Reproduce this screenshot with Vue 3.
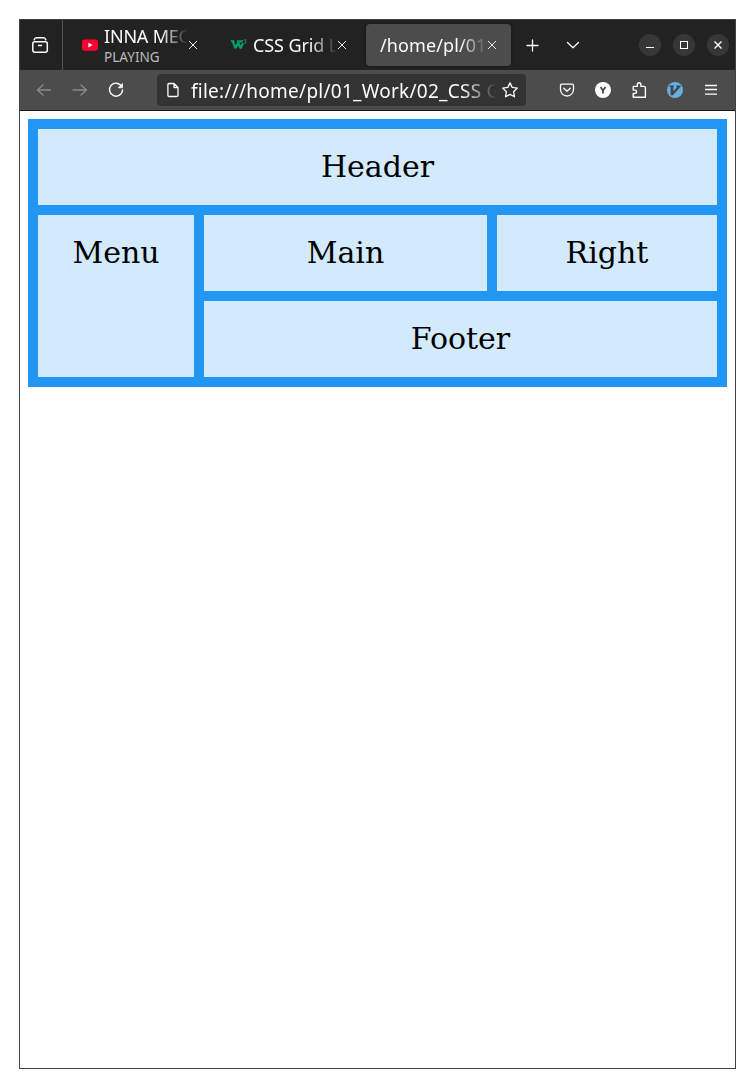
<script setup>
const cells = ['Header', 'Menu', 'Main', 'Right', 'Footer']
</script>

<template>
  <div class="window">
    <div class="tabbar">
      <div class="view">
        <svg width="18" height="18" viewBox="0 0 18 18" fill="none" stroke="#fbfbfe" stroke-width="1.5" stroke-linecap="round" stroke-linejoin="round">
          <rect x="1.8" y="5.8" width="14.5" height="10.4" rx="2" />
          <path d="M3.2 3.8Q3.8 1.8 5.5 1.8H12.5Q14.2 1.8 14.8 3.8M7.5 9.5H10.5" />
        </svg>
      </div>
      <div class="tab first">
        <svg class="fav" width="16" height="16" viewBox="0 0 16 16">
          <rect y="2.4" width="16" height="11.4" rx="2.8" fill="#ff0033" />
          <path d="M6.4 5.8 10.6 8.1 6.4 10.4Z" fill="#fff" />
        </svg>
        <div class="label">
          <div class="title t1">INNA MEC</div>
          <div class="playing">PLAYING</div>
        </div>
        <svg class="x" width="10" height="10" viewBox="0 0 10 10"><path d="M1 1 9 9M9 1 1 9" /></svg>
      </div>
      <div class="tab second">
        <svg class="fav" width="16" height="16" viewBox="0 0 16 16">
          <path d="M1.5 3.6 4.4 11.2 7.3 5.6 9.6 11.2 12 6.2" fill="none" stroke="#04a069" stroke-width="2.3" stroke-linejoin="bevel" />
          <path d="M0 3.2H3.4V5H0ZM6 3.2H12.6L11.2 5.4H6Z" fill="#04a069" />
          <path d="M13.2 2.8H15.1L14.1 4.2Q15.6 4.6 15 5.9 14.3 6.7 13.2 6" fill="none" stroke="#04a069" stroke-width=".9" />
        </svg>
        <div class="title t2">CSS Grid L</div>
        <svg class="x" width="10" height="10" viewBox="0 0 10 10"><path d="M1 1 9 9M9 1 1 9" /></svg>
      </div>
      <div class="tab active">
        <div class="title t3">/home/pl/01</div>
        <svg class="x" width="10" height="10" viewBox="0 0 10 10"><path d="M1 1 9 9M9 1 1 9" /></svg>
      </div>
      <div class="tool plus">
        <svg width="14" height="14" viewBox="0 0 14 14" class="line"><path d="M7.5 2V13M2 7.5H13" /></svg>
      </div>
      <div class="tool chevron">
        <svg width="14" height="14" viewBox="0 0 14 14" class="line"><path d="M1.5 4.5 7 9.8 12.5 4.5" /></svg>
      </div>
      <div class="controls">
        <div class="control"><svg width="22" height="22" viewBox="0 0 22 22"><path d="M7 13.5H15" stroke="#fff" /></svg></div>
        <div class="control"><svg width="22" height="22" viewBox="0 0 22 22"><rect x="7.5" y="7.5" width="7" height="7" fill="none" stroke="#fff" /></svg></div>
        <div class="control"><svg width="22" height="22" viewBox="0 0 22 22"><path d="M7.5 7.5 14.5 14.5M14.5 7.5 7.5 14.5" stroke="#fff" stroke-width="1.4" /></svg></div>
      </div>
    </div>

    <div class="toolbar">
      <div class="btn"><svg width="16" height="16" viewBox="0 0 16 16" class="line dim"><path d="M14.5 8H1.5M7 3 1.5 8 7 13" /></svg></div>
      <div class="btn"><svg width="16" height="16" viewBox="0 0 16 16" class="line dim"><path d="M1 8H14.5M9 3 14.5 8 9 13" /></svg></div>
      <div class="btn"><svg width="16" height="16" viewBox="0 0 16 16" class="line"><path d="M13.7 4.5A6.5 6.5 0 1 0 14.5 8" stroke-width="1.4" /><path d="M14.5 1.8V5.8H10.5Z" fill="#fbfbfe" stroke-width=".7" /></svg></div>
      <div class="url">
        <svg width="16" height="16" viewBox="0 0 16 16" class="line"><path d="M4.2 1.5H9L13 5.5V13.2Q13 14.5 11.7 14.5H4.2Q2.9 14.5 2.9 13.2V2.8Q2.9 1.5 4.2 1.5ZM9 1.5V5.5H13" /></svg>
        <div class="address">file:///home/pl/01_Work/02_CSS G</div>
        <svg width="16" height="16" viewBox="0 0 16 16" class="line"><path d="M8 .9 10.2 5.4 15.3 6.1 11.6 9.7 12.5 14.8 8 12.4 3.5 14.8 4.4 9.7.7 6.1 5.8 5.4Z" /></svg>
      </div>
      <div class="extensions">
        <div class="btn"><svg width="16" height="16" viewBox="0 0 16 16" class="line"><path d="M2.8 2.2H13.2Q14.5 2.2 14.5 3.5V7.6A6.5 6.4 0 0 1 1.5 7.6V3.5Q1.5 2.2 2.8 2.2ZM4.8 6.2 8 9.3 11.2 6.2" stroke-width="1.3" /></svg></div>
        <div class="btn"><svg width="16" height="16" viewBox="0 0 16 16"><circle cx="8" cy="8" r="8" fill="#fbfbfb" /><path d="M5.5 5 8 8.5 10.5 5M8 8V11.5" fill="none" stroke="#444" stroke-width="1.7" /></svg></div>
        <div class="btn"><svg width="16" height="16" viewBox="0 0 16 16" class="line"><path d="M2.5 4.4H6.3V3Q6.3 .8 8.1 .8 9.9 .8 9.9 3V4.4H13Q14.4 4.4 14.4 5.8V15.2H2.2V11.5H3.9Q5.6 11.5 5.6 9.8 5.6 8.1 3.9 8.1H2.2V4.8" stroke-width="1.4" /></svg></div>
        <div class="btn"><svg width="16" height="16" viewBox="0 0 16 16"><circle cx="8" cy="8" r="8" fill="#66afe0" /><path d="M2.4 3.6H6.9V5H6.4V9.3L10.2 5H9.2V3.6H13.8V4.5L5.9 13.3H3.6V5H2.4Z" fill="#42484d" /></svg></div>
        <div class="btn"><svg width="16" height="16" viewBox="0 0 16 16" class="menu-lines"><path d="M2 3.5H14M2 7.5H14M2 12.2H14" /></svg></div>
      </div>
    </div>

    <div class="page">
      <div class="grid">
        <div v-for="cell in cells" :key="cell" class="cell" :class="cell.toLowerCase()">{{ cell }}</div>
      </div>
    </div>
  </div>
</template>

<style>
body { background: #fff; }
</style>

<style scoped>
* { box-sizing: border-box; }
svg { display: block; flex: none; }
.window {
  width: 717px; height: 1050px; margin: 19px; border: 1px solid #414141;
  background: #fff; color: #fbfbfe; font-family: "Noto Sans", "Open Sans", sans-serif;
}
.tabbar { height: 50px; background: #222; display: flex; align-items: center; }
.view { width: 43px; height: 50px; padding-left: 11px; border-right: 1px solid #555; display: flex; align-items: center; }
.tab { display: flex; align-items: center; height: 42px; }
.first { width: 152px; padding-left: 19px; }
.second { width: 149px; padding-left: 16px; }
.fav { margin-right: 6px; }
.active { width: 145px; margin-left: 2px; padding-left: 14px; border-radius: 4px; background: #4c4c4c; box-shadow: 0 0 3px #111; }
.title { padding-top: 1px; font-size: 18px; line-height: 22px; height: 25px; white-space: nowrap; overflow: hidden; }
.t1, .t2, .t3 { -webkit-mask-image: linear-gradient(to left, transparent, #000 27px); mask-image: linear-gradient(to left, transparent, #000 27px); }
.label { width: 84px; height: 40px; }
.t1 { width: 84px; height: 23px; line-height: 21px; letter-spacing: -.2px; }
.playing { font-size: 13.5px; line-height: 18px; color: #bbb; letter-spacing: .05px; }
.t2 { width: 84px; letter-spacing: -.1px; }
.t3 { width: 107px; letter-spacing: .1px; }
.x { fill: none; stroke: #e8e8e8; stroke-width: 1; }
.line { fill: none; stroke: #fbfbfe; stroke-width: 1.3; stroke-linecap: round; stroke-linejoin: round; }
.menu-lines { fill: none; stroke: #fbfbfe; stroke-width: 1.3; }
.dim { stroke: #8c8c8c; }
.tool { width: 40px; display: flex; justify-content: center; }
.plus { margin-left: 1px; }
.chevron { margin-left: 1px; }
.controls { display: flex; margin-left: auto; gap: 12px; padding-right: 6px; }
.control { width: 22px; height: 22px; border-radius: 50%; background: #373737; }
.toolbar { height: 41px; background: #4c4c4c; border-bottom: 1px solid #19191a; display: flex; align-items: center; padding: 0 6px; }
.btn { width: 36px; display: flex; justify-content: center; }
.url { width: 369px; height: 32px; margin-left: 23px; padding: 0 8px; border-radius: 4px; background: #333; display: flex; align-items: center; }
.address {
  width: 306px; margin-left: 10px; margin-right: auto; padding-top: 2px; font-size: 19px; line-height: 28px; letter-spacing: .25px; white-space: nowrap; overflow: hidden;
  -webkit-mask-image: linear-gradient(to left, transparent, #000 35px); mask-image: linear-gradient(to left, transparent, #000 35px);
}
.extensions { display: flex; margin-left: auto; }
.page { padding: 8px; }
.grid { display: grid; grid-template-columns: 156px 283px 220px; grid-template-rows: repeat(3, 76px); gap: 10px; padding: 10px; background: #2196f3; }
.cell { padding: 20px 0; background: #d3eafd; color: #000; text-align: center; font: 30px/36px "DejaVu Serif", serif; }
.header { grid-column: 1 / 4; }
.menu { grid-row: 2 / 4; }
.footer { grid-column: 2 / 4; }
</style>
